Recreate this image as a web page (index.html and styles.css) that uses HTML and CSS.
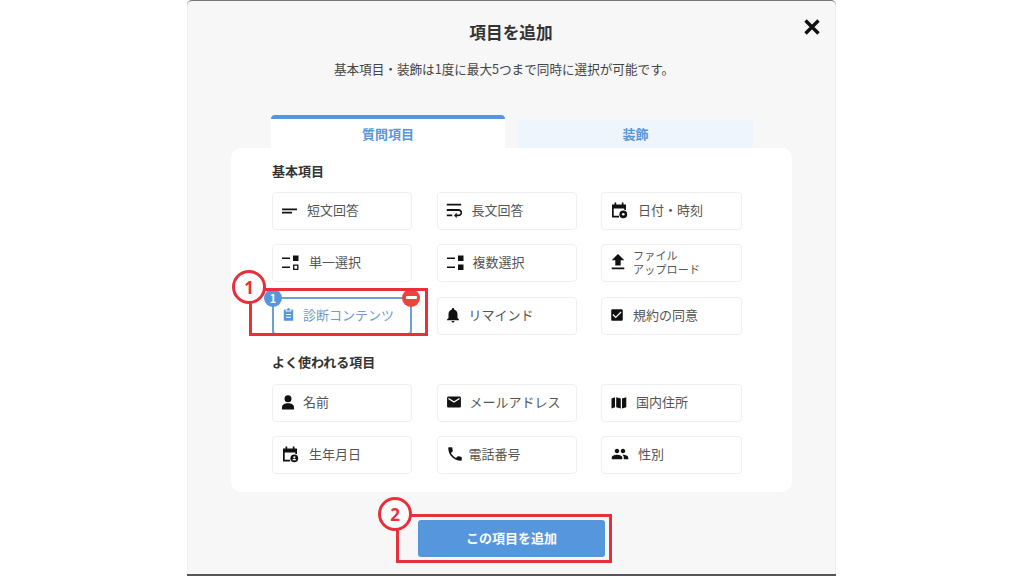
FILE: index.html
```html
<!DOCTYPE html>
<html lang="ja">
<head>
<meta charset="utf-8">
<title>項目を追加</title>
<link rel="stylesheet" href="styles.css">
</head>
<body>
<main class="modal">
  <button class="close" aria-label="閉じる"><svg viewBox="0 0 18 18" width="18" height="18"><path d="M2.5 2.5l13 13M15.5 2.5l-13 13" stroke="#111" stroke-width="3.4" fill="none"/></svg></button>
  <h1 class="title">項目を追加</h1>
  <p class="sub">基本項目・装飾は1度に最大5つまで同時に選択が可能です。</p>
  <div class="tabs">
    <div class="tab tab-active">質問項目</div>
    <div class="tab tab-idle">装飾</div>
  </div>
  <section class="panel">
    <h2 class="heading">基本項目</h2>
    <div class="grid">
      <div class="card t35"><svg class="icon" viewBox="0 0 18 18"><path d="M1 7.6h15v1.700H1zM1 10.800h10v1.700H1z"/></svg><span>短文回答</span></div>
      <div class="card t35"><svg class="icon nudge1" viewBox="2 2 20 20"><path d="M4 19h6v-2H4v2zM20 5H4v2h16V5zm-3 6H4v2h13.250c1.100 0 2 .9 2 2s-.9 2-2 2H15v-2l-3 3 3 3v-2h2c2.210 0 4-1.790 4-4s-1.790-4-4-4z"/></svg><span>長文回答</span></div>
      <div class="card t37"><svg class="icon" viewBox="0 0 18 18"><path d="M2 3.500h2.500V1.500h1.700v2h5.600v-2h1.700v2H16v5.500h-1.700V7.500H3.700v7.300h5.300v1.700H2z"/><circle cx="13.300" cy="13.300" r="3.900"/><circle cx="13.300" cy="13.300" r="1.300" fill="#fff"/></svg><span>日付・時刻</span></div>

      <div class="card t37"><svg class="icon" viewBox="0 0 18 18"><path d="M1 4.600h8v1.500H1zM1 13.600h8v1.500H1zM12 2.500h5.500V8H12z"/><path d="M12.700 12.200h4.100v4.100h-4.100z" fill="none" stroke="#111" stroke-width="1.300"/></svg><span>単一選択</span></div>
      <div class="card t36"><svg class="icon" viewBox="0 0 18 18"><path d="M1 4.600h8v1.500H1zM1 13.600h8v1.500H1zM12 2.500h5.500V8H12zM12 11.500h5.500V17H12z"/></svg><span>複数選択</span></div>
      <div class="card t32"><svg class="icon nudge1" viewBox="2 2 20 20"><path d="M5 20h14v-2H5v2zm0-10h4v6h6v-6h4l-7-7-7 7z"/></svg><span class="two">ファイル<br>アップロード</span></div>

      <div class="card card-selected"><svg class="icon icon-blue" viewBox="0 0 24 24"><path d="M9 3h1.500a1.500 1.500 0 0 1 3 0H15v2.500H9zM7.500 4v3h9V4H18a1.500 1.500 0 0 1 1.500 1.500V21a1 1 0 0 1-1 1h-13a1 1 0 0 1-1-1V5.500A1.500 1.500 0 0 1 6 4zM8 11v1.800h8V11zm0 4.500v1.800h8v-1.800z"/></svg><span>診断コンテンツ</span><span class="badge badge-num">1</span><span class="badge badge-minus"><i></i></span></div>
      <div class="card t32"><svg class="icon nudge2" viewBox="0 0 24 24"><path d="M12 22c1.100 0 2-.9 2-2h-4c0 1.100.89 2 2 2zm6-6v-5c0-3.070-1.640-5.640-4.500-6.320V4c0-.83-.67-1.500-1.500-1.500s-1.500.67-1.500 1.500v.68C7.630 5.360 6 7.920 6 11v5l-2 2v1h16v-1l-2-2z"/></svg><span>リマインド</span></div>
      <div class="card t32"><svg class="icon nudge2" viewBox="-2 -2 28 28"><path d="M19 3H5c-1.100 0-2 .9-2 2v14c0 1.100.9 2 2 2h14c1.100 0 2-.9 2-2V5c0-1.100-.9-2-2-2zm-9 14l-5-5 1.410-1.410L10 14.170l7.590-7.590L19 8l-9 9z"/></svg><span>規約の同意</span></div>
    </div>

    <h2 class="heading heading-second">よく使われる項目</h2>
    <div class="grid grid-second">
      <div class="card t31"><svg class="icon" viewBox="0 0 18 18"><circle cx="7" cy="5.800" r="3.500"/><path d="M1 16.500v-2.500C1 11.800 3.800 10.300 7 10.300s6 1.500 6 3.700v2.500z"/></svg><span>名前</span></div>
      <div class="card t33"><svg class="icon nudge1" viewBox="-1 -1 26 26"><path d="M20 4H4c-1.100 0-1.990.9-1.990 2L2 18c0 1.100.9 2 2 2h16c1.100 0 2-.9 2-2V6c0-1.100-.9-2-2-2zm0 4l-8 5-8-5V6l8 5 8-5v2z"/></svg><span>メールアドレス</span></div>
      <div class="card t35"><svg class="icon" viewBox="0 0 18 18"><path d="M1.500 5.500L5 4.200v10L1.500 15.500zM6.200 4.200l4.600 1.300v10l-4.600-1.300zM12 5.500l4.300-1.300v10L12 15.500z"/></svg><span>国内住所</span></div>

      <div class="card t37"><svg class="icon" viewBox="0 0 18 18"><path d="M2 3.500h2.500V1.500h1.700v2h5.600v-2h1.700v2H16v5.500h-1.700V7.500H3.700v7.300h5.300v1.700H2z"/><circle cx="13.300" cy="13.300" r="3.900"/><circle cx="13.300" cy="12.300" r="1.100" fill="#fff"/><path d="M11.300 15.300a2 1.500 0 0 1 4 0z" fill="#fff"/></svg><span>生年月日</span></div>
      <div class="card t32"><svg class="icon" viewBox="0 0 24 24"><path d="M6.620 10.790c1.440 2.830 3.760 5.140 6.590 6.590l2.200-2.200c.27-.27.67-.36 1.020-.24 1.120.37 2.330.57 3.570.57.55 0 1 .45 1 1V20c0 .55-.45 1-1 1-9.390 0-17-7.610-17-17 0-.55.45-1 1-1h3.500c.55 0 1 .45 1 1 0 1.250.2 2.450.57 3.570.11.35.03.74-.25 1.020l-2.200 2.200z"/></svg><span>電話番号</span></div>
      <div class="card t37"><svg class="icon nudge-right" viewBox="0 0 24 24"><path d="M16 11c1.660 0 2.990-1.340 2.990-3S17.660 5 16 5c-1.660 0-3 1.340-3 3s1.340 3 3 3zm-8 0c1.660 0 2.990-1.340 2.990-3S9.660 5 8 5C6.340 5 5 6.340 5 8s1.340 3 3 3zm0 2c-2.330 0-7 1.170-7 3.500V19h14v-2.500c0-2.330-4.670-3.500-7-3.500zm8 0c-.29 0-.62.02-.97.05 1.160.84 1.970 1.970 1.970 3.450V19h6v-2.500c0-2.330-4.670-3.500-7-3.500z"/></svg><span>性別</span></div>
    </div>
  </section>
  <button class="submit">この項目を追加</button>

  <div class="mark mark-one"></div>
  <div class="step step-one">1</div>
  <div class="mark mark-two"></div>
  <div class="step step-two">2</div>
</main>
</body>
</html>
```
FILE: styles.css
```css
* { box-sizing: border-box; }
html, body { margin: 0; padding: 0; }
body {
  width: 1024px;
  height: 576px;
  overflow: hidden;
  background: #fff;
  font-family: "Noto Sans CJK JP", "Noto Sans", sans-serif;
  color: #444;
}
.modal {
  position: relative;
  width: 649px;
  height: 576px;
  margin-left: 187px;
  padding-top: 19px;
  background: #f7f7f7;
  border-top: 1px solid #777;
  border-bottom: 2px solid #555;
  border-radius: 5px 5px 0 0;
  box-shadow: inset 1px 0 0 #eeeeee, inset -1px 0 0 #eeeeee;
  overflow: hidden;
}
.close {
  position: absolute;
  top: 17px;
  right: 15px;
  width: 18px;
  height: 18px;
  padding: 0;
  border: 0;
  background: none;
}
.close svg { display: block; }
.title {
  margin: 0;
  padding-right: 1px;
  text-align: center;
  font-size: 16.700px;
  line-height: 24px;
  font-weight: 700;
  color: #333;
}
.sub {
  margin: 16px 0 0;
  padding-right: 15px;
  text-align: center;
  font-size: 12.600px;
  line-height: 18px;
  color: #444;
}
.tabs {
  display: flex;
  align-items: flex-end;
  gap: 13px;
  height: 33px;
  margin: 37px 0 0 84px;
}
.tab {
  display: flex;
  align-items: center;
  justify-content: center;
  font-size: 13px;
  font-weight: 700;
  color: #5596dc;
}
.tab-active {
  width: 234px;
  height: 33px;
  background: #fff;
  border-top: 4px solid #5596dc;
  border-radius: 4px 4px 0 0;
}
.tab-idle {
  width: 235px;
  height: 28px;
  padding-bottom: 2px;
  background: #eef5fd;
}
.panel {
  width: 561px;
  height: 344px;
  margin-left: 44px;
  padding: 14px 41px 0;
  background: #fff;
  border-radius: 10px;
}
.heading {
  margin: 0;
  font-size: 13px;
  line-height: 18px;
  font-weight: 700;
  color: #333;
}
.heading-second { margin-top: 18px; }
.grid {
  display: grid;
  grid-template-columns: 140px 140px 141px;
  grid-auto-rows: 38px;
  column-gap: 24.500px;
  row-gap: 14.400px;
  margin-top: 12px;
}
.grid-second { margin-top: 13px; }
.card {
  position: relative;
  display: flex;
  align-items: center;
  padding: 0 0 2px 8px;
  border: 1px solid #efefef;
  border-radius: 4px;
  background: #fff;
  font-size: 13px;
  line-height: 16px;
  color: #555;
}
.card-selected {
  border: 2px solid #6a9fd8;
  padding-left: 7px;
  color: #6f9bcb;
}
.icon {
  flex: none;
  width: 18px;
  height: 18px;
  fill: #111;
}
.icon-blue {
  width: 15px;
  height: 15px;
  margin-right: 7px;
  fill: #5596dc;
}
.nudge1 { transform: translateX(-1px); }
.nudge2 { transform: translateX(-2px); }
.nudge-right { transform: translateX(1px); }
.t31 .icon { margin-right: 4px; }
.t32 .icon { margin-right: 5px; }
.t33 .icon { margin-right: 6px; }
.t35 .icon { margin-right: 8px; }
.t36 .icon { margin-right: 9px; }
.t37 .icon { margin-right: 10px; }
.two { font-size: 11px; line-height: 14.500px; letter-spacing: .2px; }
.badge {
  position: absolute;
  top: -10px;
  display: flex;
  align-items: center;
  justify-content: center;
  width: 18px;
  height: 18px;
  border-radius: 50%;
  color: #fff;
  font-size: 11px;
  font-weight: 700;
}
.badge-num { left: -10px; background: #5596dc; }
.badge-minus { right: -10px; background: #e8453c; }
.badge-minus i { display: block; width: 11px; height: 3px; border-radius: 1px; background: #fff; }
.submit {
  display: block;
  width: 187px;
  height: 37px;
  margin: 28px 0 0 231px;
  padding: 0 0 2px;
  border: 0;
  border-radius: 3px;
  background: #5596dc;
  color: #fff;
  font-family: inherit;
  font-size: 13px;
  font-weight: 700;
}
.mark {
  position: absolute;
  border: 3px solid #e8303a;
}
.mark-one { left: 62px; top: 287px; width: 179px; height: 48px; }
.mark-two { left: 209px; top: 513px; width: 216px; height: 49px; }
.step {
  position: absolute;
  display: flex;
  align-items: center;
  justify-content: center;
  width: 34px;
  height: 34px;
  border: 3px solid #e8303a;
  border-radius: 50%;
  background: #fff;
  color: #e8303a;
  font-family: "Noto Sans", sans-serif;
  font-size: 17px;
  font-weight: 700;
}
.step-one { left: 45px; top: 269px; }
.step-two { left: 191px; top: 496px; }
```
